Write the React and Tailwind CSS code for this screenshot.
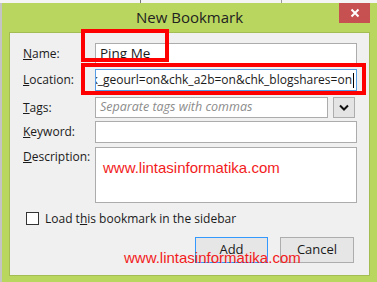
export default function App() {
  return (
    <div className="relative w-[377px] h-[282px] overflow-hidden flex flex-col bg-[#d6d6d6] font-['Open_Sans',sans-serif] text-[#1a1a1a]">
      <div className="h-[3px] bg-[#f4f4f4] flex">
        <div className="ml-[140px] w-[1px] bg-[#777]" />
        <div className="ml-[140px] w-[1px] bg-[#999]" />
      </div>
      <div className="flex flex-1 min-w-0">
        <div className="w-[2px] bg-[#c4c4c4]" />
        <div className="flex-1 min-w-0 flex flex-col bg-[#b9d65e]">
          <div className="h-[29px] flex">
            <div className="w-[38px]" />
            <div className="flex-1 text-center text-[15px] leading-[28px] text-[#222]">New Bookmark</div>
            <div className="w-[31px] h-[20px] mr-[7px] bg-[#c75050] flex items-center justify-center">
              <svg width="10" height="10" viewBox="0 0 10 10">
                <path d="M1.5 1.5 L8.5 8.5 M8.5 1.5 L1.5 8.5" stroke="#fff" strokeWidth="2" />
              </svg>
            </div>
          </div>
          <div className="flex-1 min-w-0 ml-[7px] mr-[7px] mb-[6px] bg-[#f0f0f0] border border-[#a4bd52] flex flex-col pl-[13px] pr-[12px] pt-[10px] text-[12px]">
            <div className="flex items-center h-[21px]">
              <div className="w-[72px]"><u>N</u>ame:</div>
              <div className="flex-1 h-full bg-white border border-[#acacac] flex items-center pl-[4px] text-[13.5px]">Ping Me</div>
            </div>
            <div className="flex items-center h-[22px] mt-[5px]">
              <div className="w-[72px]"><u>L</u>ocation:</div>
              <div className="flex-1 min-w-0 h-full bg-white border border-[#569de5] flex items-center justify-end overflow-hidden pr-[2px] text-[12px] whitespace-nowrap">
                <span>chk_geourl=on&amp;chk_a2b=on&amp;chk_blogshares=on</span>
                <span className="w-[1px] h-[15px] bg-black ml-[1px] shrink-0" />
              </div>
            </div>
            <div className="flex items-center h-[21px] mt-[6px]">
              <div className="w-[72px]"><u>T</u>ags:</div>
              <div className="flex-1 h-full bg-white border border-[#acacac] flex items-center pl-[4px] text-[12.5px] italic text-[#8c8c8c]">Separate tags with commas</div>
              <div className="w-[22px] h-full ml-[5px] mr-[2px] bg-[#e4e4e4] border border-[#adadad] flex items-center justify-center">
                <svg width="10" height="7" viewBox="0 0 10 7">
                  <path d="M1 1.5 L5 5.5 L9 1.5" stroke="#111" strokeWidth="2" fill="none" />
                </svg>
              </div>
            </div>
            <div className="flex items-center h-[22px] mt-[3px]">
              <div className="w-[72px]"><u>K</u>eyword:</div>
              <div className="flex-1 h-full bg-white border border-[#acacac]" />
            </div>
            <div className="flex items-start h-[56px] mt-[4px]">
              <div className="w-[72px] mt-[1px]"><u>D</u>escription:</div>
              <div className="flex-1 h-full bg-white border border-[#acacac] pl-[7px] pt-[10px] text-[15px] leading-[20px] text-[#f21c1c] font-['Liberation_Sans',sans-serif]">www.lintasinformatika.com</div>
            </div>
            <div className="flex items-center mt-[9px] h-[13px]">
              <div className="w-[13px] h-[13px] ml-[3px] bg-white border border-[#333]" />
              <div className="ml-[6px]">Load t<u>h</u>is bookmark in the sidebar</div>
            </div>
            <div className="flex justify-end gap-[12px] mt-[12px] pr-[3px]">
              <div className="w-[73px] h-[26px] bg-[#e6e6e6] border border-[#3399ff] flex items-center justify-center text-[13px]">Add</div>
              <div className="w-[74px] h-[26px] bg-[#e6e6e6] border border-[#adadad] flex items-center justify-center text-[13px]">Cancel</div>
            </div>
          </div>
        </div>
      </div>
      <div className="absolute left-[81px] top-[29px] w-[88px] h-[33px] border-4 border-[#ff0000]" />
      <div className="absolute left-[81px] top-[63px] w-[285px] h-[32px] border-4 border-[#ff0000]" />
      <div className="absolute left-[124px] top-[248px] text-[15px] leading-[20px] text-[#f21c1c] font-['Liberation_Sans',sans-serif]">www.lintasinformatika.com</div>
    </div>
  )
}
